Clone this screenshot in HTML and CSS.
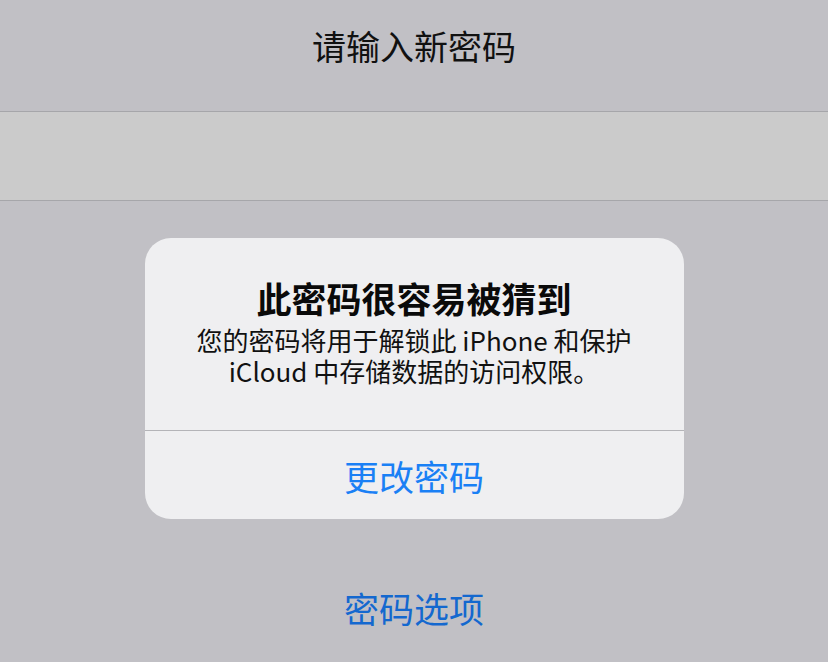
FILE: index.html
```html
<!DOCTYPE html>
<html lang="zh-CN">
<head>
<meta charset="utf-8">
<link rel="stylesheet" href="styles.css">
</head>
<body>
<div class="page">
  <header class="header"><h1 class="title">请输入新密码</h1></header>
  <div class="field"></div>
  <div class="alert">
    <div class="alert-body">
      <div class="alert-title">此密码很容易被猜到</div>
      <div class="alert-msg">
        <div class="msg-line">您的密码将用于解锁此 iPhone 和保护</div>
        <div class="msg-line">iCloud 中存储数据的访问权限。</div>
      </div>
    </div>
    <div class="alert-action">更改密码</div>
  </div>
  <div class="options">密码选项</div>
</div>
</body>
</html>
```
FILE: styles.css
```css
html, body {
  margin: 0;
  padding: 0;
  background: #c1c0c5;
}
.page {
  width: 828px;
  height: 662px;
  overflow: hidden;
  display: flex;
  flex-direction: column;
  align-items: center;
  font-family: "Noto Sans CJK SC", "Noto Sans", sans-serif;
}
.header {
  width: 100%;
  height: 111px;
  display: flex;
  justify-content: center;
  border-bottom: 1px solid #a6a6aa;
}
.title {
  margin: 24px 0 0;
  font-size: 34px;
  line-height: 44px;
  font-weight: 400;
  color: #111;
}
.field {
  width: 100%;
  height: 88px;
  background: #cbcbcb;
  border-bottom: 1px solid #a6a6aa;
}
.alert {
  margin-top: 37px;
  width: 539px;
  background: #efeff1;
  border-radius: 26px;
  display: flex;
  flex-direction: column;
  overflow: hidden;
}
.alert-body {
  padding: 40px 16px 44px;
  display: flex;
  flex-direction: column;
  align-items: center;
  gap: 6px;
  border-bottom: 1px solid #b4b4b8;
}
.alert-title {
  font-size: 35px;
  line-height: 40px;
  font-weight: 700;
  color: #0a0a0a;
}
.alert-msg {
  display: flex;
  flex-direction: column;
  align-items: center;
  font-size: 26px;
  color: #111;
}
.msg-line {
  line-height: 31px;
  height: 31px;
  white-space: nowrap;
}
.alert-action {
  height: 88px;
  display: flex;
  align-items: center;
  justify-content: center;
  font-size: 35px;
  color: #1a80f5;
}
.options {
  margin-top: 67px;
  font-size: 35px;
  line-height: 44px;
  color: #1468cf;
}
```
